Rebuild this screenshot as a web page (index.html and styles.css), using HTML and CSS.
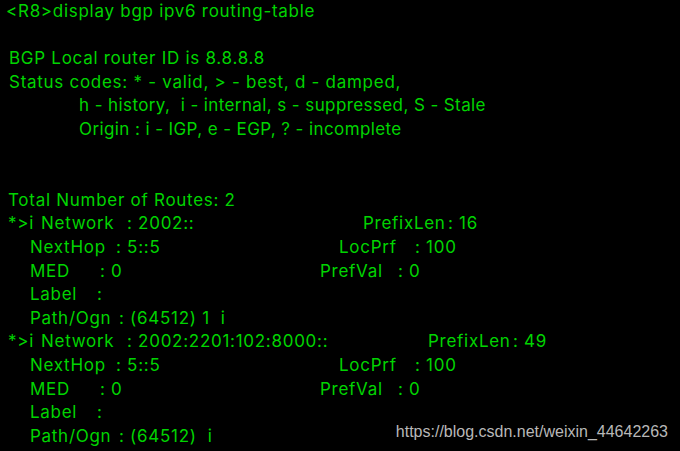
FILE: index.html
```html
<!DOCTYPE html>
<html>
<head>
<meta charset="utf-8">
<link rel="stylesheet" href="styles.css">
</head>
<body>
<div class="term">
  <div class="line ind-cmd">&lt;R8&gt;display bgp ipv6 routing-table</div>
  <div class="line"></div>
  <div class="line ind-hdr">BGP Local router ID is 8.8.8.8</div>
  <div class="line ind-hdr">Status codes: * - valid, &gt; - best, d - damped,</div>
  <div class="line ind-sub">h - history,  i - internal, s - suppressed, S - Stale</div>
  <div class="line ind-sub">Origin : i - IGP, e - EGP, ? - incomplete</div>
  <div class="line"></div>
  <div class="line"></div>
  <div class="line ind-total">Total Number of Routes: 2</div>

  <div class="line ind-route"><span class="flag flag-on">*&gt;i</span><span class="lcol lc-net1"><span class="k k-net">Network</span>: 2002::</span><span class="rk rk-pfx">PrefixLen</span>: 16</div>
  <div class="line ind-route"><span class="flag"></span><span class="lcol lc-hop"><span class="k k-hop">NextHop</span>: 5::5</span><span class="rk rk-loc">LocPrf</span>: 100</div>
  <div class="line ind-route"><span class="flag"></span><span class="lcol lc-med"><span class="k k-med">MED</span>: 0</span><span class="rk rk-val">PrefVal</span>: 0</div>
  <div class="line ind-route"><span class="flag"></span><span class="k k-lab">Label</span>:</div>
  <div class="line ind-route"><span class="flag"></span><span class="k k-path">Path/Ogn</span>: (64512) 1  i</div>

  <div class="line ind-route"><span class="flag flag-on">*&gt;i</span><span class="lcol lc-net2"><span class="k k-net">Network</span>: 2002:2201:102:8000::</span><span class="rk rk-pfx">PrefixLen</span>: 49</div>
  <div class="line ind-route"><span class="flag"></span><span class="lcol lc-hop"><span class="k k-hop">NextHop</span>: 5::5</span><span class="rk rk-loc">LocPrf</span>: 100</div>
  <div class="line ind-route"><span class="flag"></span><span class="lcol lc-med"><span class="k k-med">MED</span>: 0</span><span class="rk rk-val">PrefVal</span>: 0</div>
  <div class="line ind-route"><span class="flag"></span><span class="k k-lab">Label</span>:</div>
  <div class="line ind-route"><span class="flag"></span><span class="k k-path">Path/Ogn</span>: (64512)  i</div>
</div>
<div class="watermark">https://blog.csdn.net/weixin_44642263</div>
</body>
</html>
```

FILE: styles.css
```css
html, body {
  margin: 0;
  padding: 0;
  background: #000;
  width: 680px;
  height: 451px;
  overflow: hidden;
}
body {
  position: relative;
}
.term {
  font-family: Inter, "Noto Sans", sans-serif;
  font-size: 17px;
  letter-spacing: 0.72px;
  color: #00d400;
}
.line {
  height: 23.6px;
  line-height: 23.6px;
  white-space: pre;
}
.ind-cmd { padding-left: 6px; }
.ind-hdr { padding-left: 9px; }
.ind-sub { padding-left: 79px; letter-spacing: 0.4px; }
.ind-total { padding-left: 8px; }
.ind-route { padding-left: 8px; }
.flag {
  display: inline-block;
  width: 22px;
}
.flag-on { width: 33px; }
.lcol, .k, .rk { display: inline-block; }
.lc-net1 { width: 322px; }
.lc-net2 { width: 387px; }
.lc-hop { width: 309px; }
.lc-med { width: 290px; }
.k-net { width: 86px; }
.k-hop { width: 86px; }
.k-med { width: 70px; }
.k-lab { width: 67px; }
.k-path { width: 89px; }
.rk-pfx { width: 85px; }
.rk-loc { width: 76px; }
.rk-val { width: 78px; }
.watermark {
  position: absolute;
  right: 12px;
  top: 423px;
  font-family: "Liberation Sans", Arial, sans-serif;
  font-size: 16px;
  color: #b8b8b8;
  line-height: 18px;
}
```
